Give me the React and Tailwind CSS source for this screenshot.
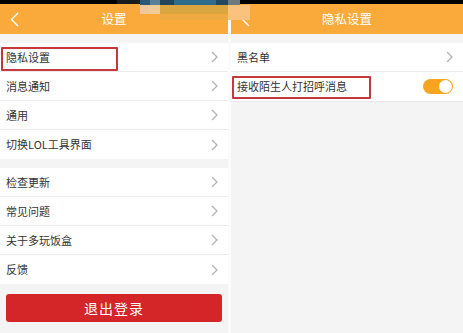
import React from 'react';

const font = { fontFamily: '"Noto Sans CJK SC", "Noto Sans", sans-serif' };

const Chevron = ({ className = '' }) => (
  <svg width="7" height="12" viewBox="0 0 7 12" className={className}>
    <polyline points="1,1 6,6 1,11" fill="none" stroke="#b3b3b3" strokeWidth="1.3" />
  </svg>
);

const BackArrow = () => (
  <svg width="9" height="15" viewBox="0 0 9 15" className="absolute left-[10px] top-[8px]">
    <polyline points="8,1 1.5,7.5 8,14" fill="none" stroke="#ffffff" strokeWidth="1.4" />
  </svg>
);

const Row = ({ label, last, children }) => (
  <div className={`flex items-center justify-between h-[29px] pl-[6px] pr-[10px] bg-white ${last ? '' : 'border-b border-[#ececec]'}`}>
    <span className="text-[11px] text-[#333]">{label}</span>
    {children || <Chevron />}
  </div>
);

const Header = ({ title }) => (
  <>
    <div className="h-[4px] bg-black" />
    <div className="relative h-[30px] bg-[#f9aa3b] flex items-center justify-center">
      <BackArrow />
      <span className="text-[12.5px] text-white">{title}</span>
    </div>
  </>
);

// mosaic-blurred area over the status bar
const blocks = [
  ['left-[117px] top-0 w-[23px] h-[4px] bg-[#1c1c1c]'],
  ['left-[140px] top-0 w-[10px] h-[5px] bg-[#2c5877]'],
  ['left-[150px] top-0 w-[10px] h-[5px] bg-[#5b7f97]'],
  ['left-[160px] top-0 w-[14px] h-[5px] bg-[#23455c]'],
  ['left-[174px] top-0 w-[42px] h-[5px] bg-[#2f6c8b]'],
  ['left-[216px] top-0 w-[12px] h-[5px] bg-[#234a60]'],
  ['left-[228px] top-0 w-[12px] h-[5px] bg-[#6d7a7e]'],
  ['left-[140px] top-[5px] w-[10px] h-[9px] bg-[#eec79a]'],
  ['left-[150px] top-[5px] w-[10px] h-[9px] bg-[#f3cb96]'],
  ['left-[160px] top-[5px] w-[68px] h-[9px] bg-[#dba640]'],
  ['left-[228px] top-[5px] w-[22px] h-[15px] bg-[#fbc27d]'],
  ['left-[160px] top-[14px] w-[68px] h-[6px] bg-[#eeab42]'],
];

export default function App() {
  return (
    <div className="relative w-[463px] h-[333px] flex bg-white overflow-hidden" style={font}>
      {/* left: 设置 */}
      <div className="relative w-[228px] h-full bg-[#f4f4f4] flex flex-col">
        <Header title="设置" />
        <div className="h-[9px]" />
        <div>
          <Row label="隐私设置" />
          <Row label="消息通知" />
          <Row label="通用" />
          <Row label="切换LOL工具界面" last />
        </div>
        <div className="h-[9px]" />
        <div>
          <Row label="检查更新" />
          <Row label="常见问题" />
          <Row label="关于多玩饭盒" />
          <Row label="反馈" last />
        </div>
        <div className="px-[6px] pt-[10px]">
          <button className="w-full h-[28px] rounded-[3px] bg-[#d42628] text-white text-[14px] tracking-[1px]">
            退出登录
          </button>
        </div>
        <div className="absolute left-[1px] top-[47px] w-[117px] h-[24px] border-2 border-[#c7383d] rounded-[1px]" />
      </div>

      <div className="w-[3px] h-full bg-[#fbfbfb]" />

      {/* right: 隐私设置 */}
      <div className="relative flex-1 h-full bg-[#f4f4f4] flex flex-col">
        <Header title="隐私设置" />
        <div className="h-[9px]" />
        <div>
          <Row label="黑名单" />
          <Row label="接收陌生人打招呼消息" last>
            <div className="w-[30px] h-[15px] rounded-full bg-[#f7a520] flex items-center justify-end pr-[1px]">
              <div className="w-[13px] h-[13px] rounded-full bg-white" />
            </div>
          </Row>
        </div>
        <div className="border-t border-[#e8e8e8]" />
        <div className="absolute left-[1px] top-[76px] w-[139px] h-[23px] border-2 border-[#c7383d] rounded-[1px]" />
      </div>

      {blocks.map(([c], i) => (
        <div key={i} className={`absolute ${c}`} />
      ))}
    </div>
  );
}
